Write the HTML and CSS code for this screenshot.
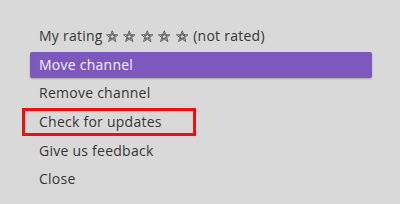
FILE: index.html
```html
<!DOCTYPE html>
<html lang="en">
<head>
	<meta charset="UTF-8">
	<title>Channel options</title>
	<link rel="stylesheet" href="styles.css">
</head>
<body>
	<ul class="optionList">
		<li class="option">
			My rating
			<span class="stars">
				<svg class="star" viewBox="0 0 24 24"><polygon points="12,1.5 15,9 23,9.3 16.8,14.3 19,22.2 12,17.7 5,22.2 7.2,14.3 1,9.3 9,9"/><polygon points="12,6.5 13.6,10.6 18,10.8 14.6,13.5 15.8,17.8 12,15.3 8.2,17.8 9.4,13.5 6,10.8 10.4,10.6"/></svg>
				<svg class="star" viewBox="0 0 24 24"><polygon points="12,1.5 15,9 23,9.3 16.8,14.3 19,22.2 12,17.7 5,22.2 7.2,14.3 1,9.3 9,9"/><polygon points="12,6.5 13.6,10.6 18,10.8 14.6,13.5 15.8,17.8 12,15.3 8.2,17.8 9.4,13.5 6,10.8 10.4,10.6"/></svg>
				<svg class="star" viewBox="0 0 24 24"><polygon points="12,1.5 15,9 23,9.3 16.8,14.3 19,22.2 12,17.7 5,22.2 7.2,14.3 1,9.3 9,9"/><polygon points="12,6.5 13.6,10.6 18,10.8 14.6,13.5 15.8,17.8 12,15.3 8.2,17.8 9.4,13.5 6,10.8 10.4,10.6"/></svg>
				<svg class="star" viewBox="0 0 24 24"><polygon points="12,1.5 15,9 23,9.3 16.8,14.3 19,22.2 12,17.7 5,22.2 7.2,14.3 1,9.3 9,9"/><polygon points="12,6.5 13.6,10.6 18,10.8 14.6,13.5 15.8,17.8 12,15.3 8.2,17.8 9.4,13.5 6,10.8 10.4,10.6"/></svg>
				<svg class="star" viewBox="0 0 24 24"><polygon points="12,1.5 15,9 23,9.3 16.8,14.3 19,22.2 12,17.7 5,22.2 7.2,14.3 1,9.3 9,9"/><polygon points="12,6.5 13.6,10.6 18,10.8 14.6,13.5 15.8,17.8 12,15.3 8.2,17.8 9.4,13.5 6,10.8 10.4,10.6"/></svg>
			</span>
			(not rated)
		</li>
		<li class="option active">Move channel</li>
		<li class="option">Remove channel</li>
		<li class="option marked">Check for updates</li>
		<li class="option">Give us feedback</li>
		<li class="option">Close</li>
	</ul>
</body>
</html>
```

FILE: styles.css
```css
* {
	padding: 0;
	margin: 0;
	list-style: none;
}
html, body {
	width: 400px;
	height: 204px;
	overflow: hidden;
	background: #d9d9d9;
}
body {
	font-family: "Open Sans", sans-serif;
	font-size: 14px;
	letter-spacing: 0.25px;
	color: #363636;
}
/* 菜单列表 */
.optionList {
	display: flex;
	flex-direction: column;
	gap: 2.6px;
	width: 342px;
	padding: 23.2px 0 0 30px;
}
.option {
	position: relative;
	display: flex;
	align-items: center;
	height: 26px;
	line-height: 26px;
	padding-left: 9px;
	white-space: nowrap;
}
.option.active {
	background: #7d58bf;
	color: #f4f1f8;
	border-radius: 2px;
	box-shadow: 0 1px 2px rgba(0, 0, 0, 0.25);
}
/* 红色标注框 */
.option.marked:after {
	content: '';
	position: absolute;
	left: -8px;
	top: -0.5px;
	width: 168px;
	height: 22px;
	border: 3px solid #f00f0f;
}
.stars {
	display: flex;
	gap: 5px;
	margin: 0 5px 0 3px;
}
.star {
	width: 12.5px;
	height: 12.5px;
	fill: none;
	stroke: #4a4a4a;
	stroke-width: 1.6;
	stroke-linejoin: round;
}
```
